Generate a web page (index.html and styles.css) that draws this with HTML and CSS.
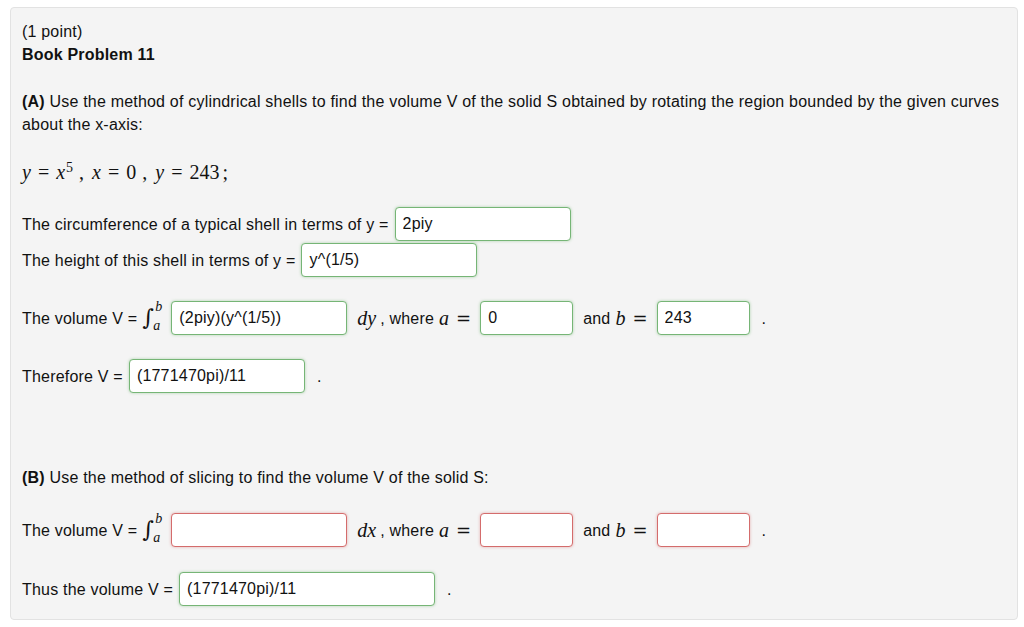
FILE: index.html
```html
<!DOCTYPE html>
<html lang="en">
<head>
    <meta charset="UTF-8">
    <title>Book Problem 11</title>
    <link rel="stylesheet" href="styles.css">
</head>
<body>
    <div class="problem">
        <div class="line">(1 point)</div>
        <div class="line title">Book Problem 11</div>

        <div class="para">
            <b>(A)</b> Use the method of cylindrical shells to find the volume V of the solid S obtained by rotating the region bounded by the given curves about the x-axis:
        </div>

        <div class="math-line">
            <span class="m">y</span><span class="op">=</span><span class="m">x</span><sup class="pow">5</sup><span class="sep">,</span><span class="m">x</span><span class="op">=</span><span class="num">0</span><span class="sep">,</span><span class="m">y</span><span class="op">=</span><span class="num">243</span><span class="semi">;</span>
        </div>

        <div class="row first">
            <span>The circumference of a typical shell in terms of y =</span>
            <input class="ans ok w175" type="text" value="2piy" readonly>
        </div>
        <div class="row tight">
            <span>The height of this shell in terms of y =</span>
            <input class="ans ok w175" type="text" value="y^(1/5)" readonly>
        </div>

        <div class="row">
            <span>The volume V =</span>
            <span class="integral">∫<span class="lim-b">b</span><span class="lim-a">a</span></span>
            <input class="ans ok w175" type="text" value="(2piy)(y^(1/5))" readonly>
            <span class="dvar"><i>dy</i></span>
            <span class="txt">, where</span><i class="mv">a</i><span class="op">=</span>
            <input class="ans ok w92" type="text" value="0" readonly>
            <span class="txt">and</span><i class="mv">b</i><span class="op">=</span>
            <input class="ans ok w92" type="text" value="243" readonly>
            <span class="dot">.</span>
        </div>

        <div class="row">
            <span>Therefore V =</span>
            <input class="ans ok w175" type="text" value="(1771470pi)/11" readonly>
            <span class="dot">.</span>
        </div>

        <div class="para part-b">
            <b>(B)</b> Use the method of slicing to find the volume V of the solid S:
        </div>

        <div class="row">
            <span>The volume V =</span>
            <span class="integral">∫<span class="lim-b">b</span><span class="lim-a">a</span></span>
            <input class="ans bad w175" type="text" value="" readonly>
            <span class="dvar"><i>dx</i></span>
            <span class="txt">, where</span><i class="mv">a</i><span class="op">=</span>
            <input class="ans bad w92" type="text" value="" readonly>
            <span class="txt">and</span><i class="mv">b</i><span class="op">=</span>
            <input class="ans bad w92" type="text" value="" readonly>
            <span class="dot">.</span>
        </div>

        <div class="row last">
            <span>Thus the volume V =</span>
            <input class="ans ok w255" type="text" value="(1771470pi)/11" readonly>
            <span class="dot">.</span>
        </div>
    </div>
</body>
</html>
```

FILE: styles.css
```css
body {
    margin: 0;
    background-color: #ffffff;
    font-family: "Liberation Sans", Arial, sans-serif;
    font-size: 16px;
    letter-spacing: 0.2px;
    color: #111;
}

.problem {
    margin: 7px 6px 8px 10px;
    padding: 12px 6px 13px 11px;
    background-color: #f4f4f4;
    border: 1px solid #e2e2e2;
    border-radius: 4px;
    line-height: 23px;
}

.title {
    font-weight: bold;
}

.para {
    margin-top: 24px;
}

.math-line {
    margin-top: 25px;
    height: 23px;
    font-family: "Liberation Serif", "DejaVu Serif", serif;
    font-size: 20px;
    letter-spacing: 0;
    display: flex;
    align-items: center;
}

.m {
    font-style: italic;
}

.math-line .op {
    margin: 0 7px;
}

.pow {
    font-size: 14px;
    line-height: 1;
    position: relative;
    top: -5px;
    margin-left: 1px;
}

.sep {
    margin: 0 8px 0 6px;
}

.semi {
    margin-left: 3px;
}

.row {
    display: flex;
    align-items: center;
    margin-top: 24px;
}

.row.first {
    margin-top: 23px;
}

.row.tight {
    margin-top: 2px;
}

.row.last {
    margin-top: 25px;
}

.part-b {
    margin-top: 73px;
}

.ans {
    box-sizing: border-box;
    height: 34px;
    padding: 0 7px;
    margin-left: 6px;
    font-family: "Liberation Sans", Arial, sans-serif;
    font-size: 16px;
    letter-spacing: 0.2px;
    color: #111;
    background-color: #fff;
    border-radius: 4px;
    outline: none;
}

.ans.ok {
    border: 1px solid #76b576;
    box-shadow: 0 0 3px rgba(90, 170, 90, 0.45);
}

.ans.bad {
    border: 1px solid #d46c6c;
    box-shadow: 0 0 3px rgba(210, 90, 90, 0.45);
}

.w175 { width: 176px; }
.w92 { width: 93px; }
.w255 { width: 256px; }

/* integral sign with limits */
.integral {
    position: relative;
    display: inline-block;
    width: 20px;
    height: 28px;
    margin-left: 5px;
    margin-right: 3px;
    font-family: "DejaVu Serif", serif;
    font-size: 22px;
    line-height: 28px;
    letter-spacing: 0;
}

.lim-b,
.lim-a {
    position: absolute;
    font-family: "Liberation Serif", serif;
    font-style: italic;
    font-size: 14px;
    line-height: 1;
}

.lim-b {
    top: -4px;
    left: 13px;
}

.lim-a {
    top: 15px;
    left: 11px;
}

.dvar {
    margin-left: 10px;
    font-family: "Liberation Serif", "DejaVu Serif", serif;
    font-size: 20px;
    letter-spacing: 0;
}

.dvar + .txt {
    margin-left: 4px;
}

.mv {
    margin-left: 5px;
    font-family: "Liberation Serif", "DejaVu Serif", serif;
    font-size: 20px;
    letter-spacing: 0;
}

.row .op {
    margin: 0 3px 0 7px;
    font-family: "DejaVu Serif", serif;
    font-size: 18px;
    letter-spacing: 0;
}

.dot {
    margin-left: 12px;
}

.ans + .txt {
    margin-left: 10px;
}
```
